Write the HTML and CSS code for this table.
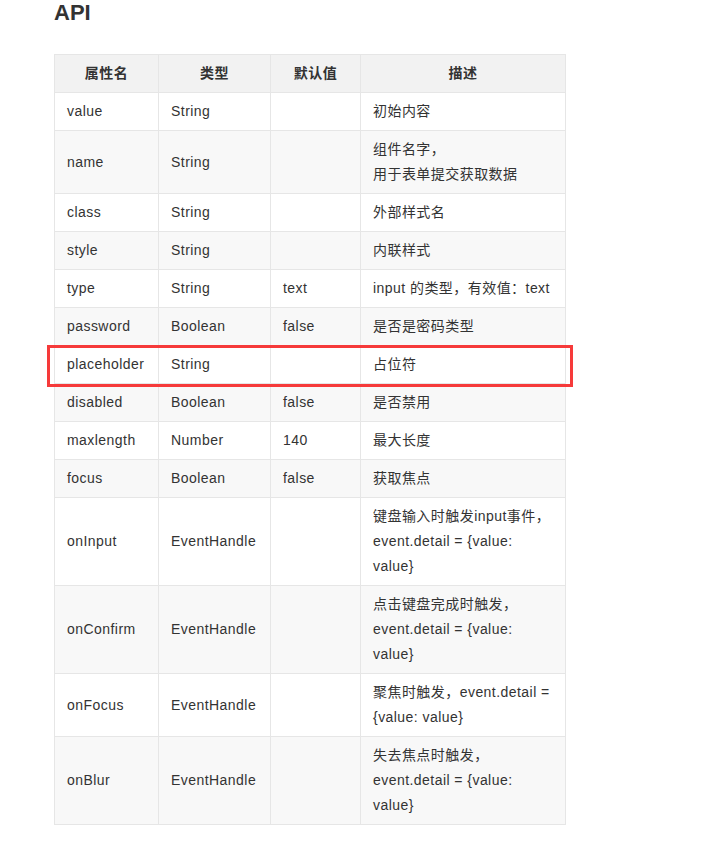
FILE: index.html
```html
<!DOCTYPE html>
<html lang="zh-CN">
<head>
<meta charset="utf-8">
<link rel="stylesheet" href="styles.css">
</head>
<body>
<div class="page">
  <h2 class="title">API</h2>
  <div class="table-wrap">
    <table class="api">
      <colgroup>
        <col class="c1"><col class="c2"><col class="c3"><col class="c4">
      </colgroup>
      <thead>
        <tr><th>属性名</th><th>类型</th><th>默认值</th><th>描述</th></tr>
      </thead>
      <tbody>
        <tr><td>value</td><td>String</td><td></td><td>初始内容</td></tr>
        <tr><td>name</td><td>String</td><td></td><td>组件名字，<br>用于表单提交获取数据</td></tr>
        <tr><td>class</td><td>String</td><td></td><td>外部样式名</td></tr>
        <tr><td>style</td><td>String</td><td></td><td>内联样式</td></tr>
        <tr><td>type</td><td>String</td><td>text</td><td>input 的类型，有效值：text</td></tr>
        <tr><td>password</td><td>Boolean</td><td>false</td><td>是否是密码类型</td></tr>
        <tr><td>placeholder</td><td>String</td><td></td><td>占位符</td></tr>
        <tr><td>disabled</td><td>Boolean</td><td>false</td><td>是否禁用</td></tr>
        <tr><td>maxlength</td><td>Number</td><td>140</td><td>最大长度</td></tr>
        <tr><td>focus</td><td>Boolean</td><td>false</td><td>获取焦点</td></tr>
        <tr><td>onInput</td><td>EventHandle</td><td></td><td>键盘输入时触发input事件，event.detail = {value: value}</td></tr>
        <tr><td>onConfirm</td><td>EventHandle</td><td></td><td>点击键盘完成时触发，event.detail = {value: value}</td></tr>
        <tr><td>onFocus</td><td>EventHandle</td><td></td><td>聚焦时触发，event.detail = {value: value}</td></tr>
        <tr><td>onBlur</td><td>EventHandle</td><td></td><td>失去焦点时触发，event.detail = {value: value}</td></tr>
      </tbody>
    </table>
    <div class="highlight"></div>
  </div>
</div>
</body>
</html>
```

FILE: styles.css
```css
html, body {
  margin: 0;
  padding: 0;
  background: #fff;
}

.page {
  padding: 1px 0 0 54px;
  font-family: "Liberation Sans", Arial, "Noto Sans CJK SC", sans-serif;
  color: #333;
}

.title {
  margin: 0 0 29px 0;
  font-size: 22px;
  line-height: 24px;
  font-weight: bold;
  color: #333;
}

.table-wrap {
  position: relative;
  width: 511px;
}

.api {
  width: 511px;
  table-layout: fixed;
  border-collapse: collapse;
  font-size: 14px;
  line-height: 25px;
  letter-spacing: 0.45px;
}

.c1 { width: 104px; }
.c2 { width: 112px; }
.c3 { width: 90px; }
.c4 { width: 205px; }

.api th,
.api td {
  border: 1px solid #e6e6e6;
  padding: 6px 12px;
  vertical-align: middle;
  text-align: left;
  word-wrap: break-word;
}

.api th {
  background: #f2f2f2;
  text-align: center;
  font-weight: bold;
}

.api tbody tr:nth-child(even) td {
  background: #f8f8f8;
}

.highlight {
  position: absolute;
  left: -7px;
  top: 291px;
  width: 526px;
  height: 42px;
  box-sizing: border-box;
  border: 3px solid #f63a3a;
  pointer-events: none;
}
```
